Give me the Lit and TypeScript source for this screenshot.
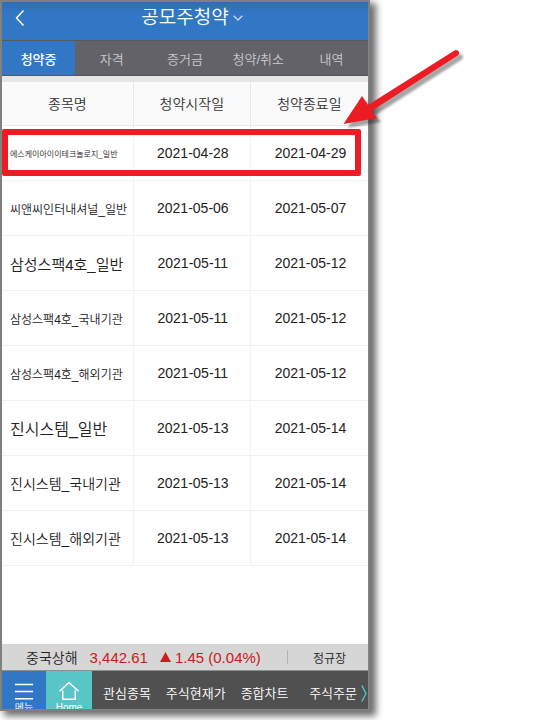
import { LitElement, html, css } from "lit";
import { customElement } from "lit/decorators.js";

type Offer = { name: string; size: string; start: string; end: string; marked?: boolean };

const OFFERS: Offer[] = [
  { name: "에스케이아이이테크놀로지_일반", size: "xs", start: "2021-04-28", end: "2021-04-29", marked: true },
  { name: "씨앤씨인터내셔널_일반", size: "sm", start: "2021-05-06", end: "2021-05-07" },
  { name: "삼성스팩4호_일반", size: "lg", start: "2021-05-11", end: "2021-05-12" },
  { name: "삼성스팩4호_국내기관", size: "sm", start: "2021-05-11", end: "2021-05-12" },
  { name: "삼성스팩4호_해외기관", size: "sm", start: "2021-05-11", end: "2021-05-12" },
  { name: "진시스템_일반", size: "xl", start: "2021-05-13", end: "2021-05-14" },
  { name: "진시스템_국내기관", size: "md", start: "2021-05-13", end: "2021-05-14" },
  { name: "진시스템_해외기관", size: "md", start: "2021-05-13", end: "2021-05-14" },
];

const TABS = ["청약중", "자격", "증거금", "청약/취소", "내역"];
const SHORTCUTS = ["관심종목", "주식현재가", "종합차트", "주식주문"];

@customElement("app-root")
export class AppRoot extends LitElement {
  static styles = css`
    :host {
      position: relative;
      min-height: 100vh;
      box-sizing: border-box;
      padding-bottom: 9px;
      display: grid;
      grid-template-columns: 370fr 181fr;
      overflow: hidden;
      background: #fff;
      font-family: "Liberation Sans", "Noto Sans CJK KR", sans-serif;
      font-weight: 350;
      color: #222;
    }
    * { box-sizing: border-box; }
    button {
      font: inherit;
      color: inherit;
      background: none;
      border: 0;
      padding: 0;
      margin: 0;
      cursor: pointer;
    }
    svg { display: block; }
    .phone {
      display: flex;
      flex-direction: column;
      min-width: 0;
      border: 2px solid #808080;
      background: #fff;
      box-shadow: 5px 4px 7px 1px #6c6c6c;
    }
    .top {
      display: grid;
      grid-template-columns: 36px 1fr 36px;
      align-items: center;
      height: 38px;
      padding-bottom: 6px;
      background: linear-gradient(#2d6db5, #3277c5 30%);
      color: #fff;
    }
    .back { justify-self: center; }
    .title {
      display: flex;
      align-items: center;
      justify-content: center;
      gap: 4px;
      font-size: 19px;
      line-height: 28px;
      margin-left: 14px;
    }
    .title h1 { font: inherit; margin: 0; }
    .tabs {
      display: grid;
      grid-template-columns: repeat(5, 1fr);
      height: 36px;
      background: #636268;
      border-top: 1px solid #59595f;
      border-bottom: 1px solid #55555a;
      color: #c9c9cb;
      font-size: 13px;
    }
    .tabs .on {
      background: #3277c5;
      color: #fff;
      font-weight: 500;
    }
    .list {
      flex: 1;
      border-top: 6px solid #e6e6e4;
    }
    table {
      width: 100%;
      table-layout: fixed;
      border-collapse: separate;
      border-spacing: 0;
    }
    th, td {
      border-bottom: 1px solid #f1f1f1;
      border-right: 1px solid #f3f3f3;
      padding: 0;
      font-weight: 350;
      font-size: 14px;
      text-align: center;
      white-space: nowrap;
    }
    td { padding-left: 2px; }
    th:last-child, td:last-child { border-right: 0; }
    thead th {
      height: 44px;
      padding-bottom: 2px;
      background: #fafafa;
      border-color: #e8e8e8;
      color: #333;
    }
    .wide { width: 36%; }
    tbody tr { position: relative; }
    tbody th, tbody td { height: 55px; }
    tbody th { text-align: left; padding-left: 8px; }
    tbody .xs { font-size: 8px; }
    tbody .sm { font-size: 12px; }
    tbody .md { font-size: 14px; }
    tbody .lg { font-size: 15px; }
    tbody .xl { font-size: 16px; }
    .mark {
      position: absolute;
      inset: 3px 7px 5px 0;
      border: 6px solid #ed1c24;
      border-radius: 2px;
      pointer-events: none;
    }
    .index {
      display: flex;
      align-items: center;
      height: 27px;
      padding: 0 22px 0 24px;
      background: #d6d6d6;
      border-bottom: 1px solid #8e8e8e;
      font-size: 14px;
      white-space: nowrap;
    }
    .figures {
      display: flex;
      align-items: center;
      gap: 12px;
      margin-left: 12px;
      color: #c8201c;
      font-size: 15px;
    }
    .change { display: flex; align-items: center; gap: 4px; }
    .session {
      margin-left: auto;
      display: flex;
      align-items: center;
      gap: 25px;
      font-size: 12px;
    }
    .session::before {
      content: "";
      width: 1px;
      height: 14px;
      background: #b4b4b4;
    }
    .dock {
      display: grid;
      grid-template-columns: 44px 46px 1fr;
      grid-template-rows: 38px;
      background: #505050;
      color: #fff;
      overflow: hidden;
    }
    .tile {
      display: flex;
      flex-direction: column;
      align-items: center;
      justify-content: flex-start;
      padding-top: 10px;
      height: 48px;
      font-size: 10px;
      line-height: 12px;
      gap: 1px;
    }
    .menu { background: #3277c5; }
    .home { background: #58c5c7; }
    .shortcuts {
      display: flex;
      align-items: center;
      gap: 15px;
      padding: 7px 1px 0 11px;
      font-size: 13px;
      line-height: 20px;
      white-space: nowrap;
    }
    .last { display: flex; align-items: center; gap: 4px; margin-left: auto; }
    .arrow {
      position: absolute;
      left: 62%;
      top: 44px;
      pointer-events: none;
    }
  `;

  render() {
    return html`
      <main class="phone">
        <header class="top">
          <button class="back" aria-label="뒤로">
            <svg width="10" height="18" viewBox="0 0 10 18" fill="none" stroke="#fff" stroke-width="1.4"><path d="M8.500 1.500 1.500 9l7 7.500" /></svg>
          </button>
          <button class="title">
            <h1>공모주청약</h1>
            <svg width="10" height="6" viewBox="0 0 10 6" fill="none" stroke="#c4dcf5" stroke-width="1.3"><path d="M.7.7 5 5 9.3.7" /></svg>
          </button>
        </header>
        <nav class="tabs">
          ${TABS.map((t, i) => html`<button class=${i === 0 ? "on" : "off"}>${t}</button>`)}
        </nav>
        <section class="list">
          <table>
            <thead>
              <tr><th class="wide" scope="col">종목명</th><th scope="col">청약시작일</th><th scope="col">청약종료일</th></tr>
            </thead>
            <tbody>
              ${OFFERS.map((o) => html`
                <tr>
                  <th scope="row" class=${o.size}>${o.name}</th>
                  <td>${o.start}</td>
                  <td>${o.end}${o.marked ? html`<span class="mark"></span>` : ""}</td>
                </tr>`)}
            </tbody>
          </table>
        </section>
        <section class="index">
          <span>중국상해</span>
          <span class="figures">
            <span>3,442.61</span>
            <span class="change">
              <svg width="11" height="10" viewBox="0 0 11 10" fill="#c8201c"><path d="M5.500 0 11 10H0z" /></svg>
              1.45 (0.04%)
            </span>
          </span>
          <span class="session">정규장</span>
        </section>
        <nav class="dock">
          <button class="tile menu">
            <svg width="18" height="20" viewBox="0 0 18 20" stroke="#fff" stroke-width="1.6"><path d="M0 3.500h18M0 10.500h18M0 17.800h18" /></svg>
            메뉴
          </button>
          <button class="tile home">
            <svg width="20" height="20" viewBox="0 0 20 20" fill="none" stroke="#fff" stroke-width="1.5" stroke-linejoin="round" stroke-linecap="round"><path d="M1 9.800 10 1.500l9 8.300M3.800 10v8.200h12.400V10" /></svg>
            Home
          </button>
          <div class="shortcuts">
            ${SHORTCUTS.slice(0, 3).map((s) => html`<button>${s}</button>`)}
            <button class="last">
              ${SHORTCUTS[3]}
              <svg width="6" height="17" viewBox="0 0 6 17" fill="none" stroke="#4fc4cc" stroke-width="1.4"><path d="M.8.5 5 8.500l-4.200 8" /></svg>
            </button>
          </div>
        </nav>
      </main>
      <svg class="arrow" width="126" height="90" viewBox="0 0 126 90">
        <defs>
          <filter id="soft" x="-10%" y="-10%" width="120%" height="120%"><feGaussianBlur stdDeviation="1" /></filter>
          <g id="shape">
            <path d="M1.500 80 20 52l6 9L112.500 6.500a2.800 2.800 0 0 1 3 5.200L29.500 67l5.500 7z" />
          </g>
        </defs>
        <use href="#shape" x="4" y="4" fill="#000" opacity=".35" filter="url(#soft)" />
        <use href="#shape" fill="#ed1c24" />
      </svg>
    `;
  }
}
